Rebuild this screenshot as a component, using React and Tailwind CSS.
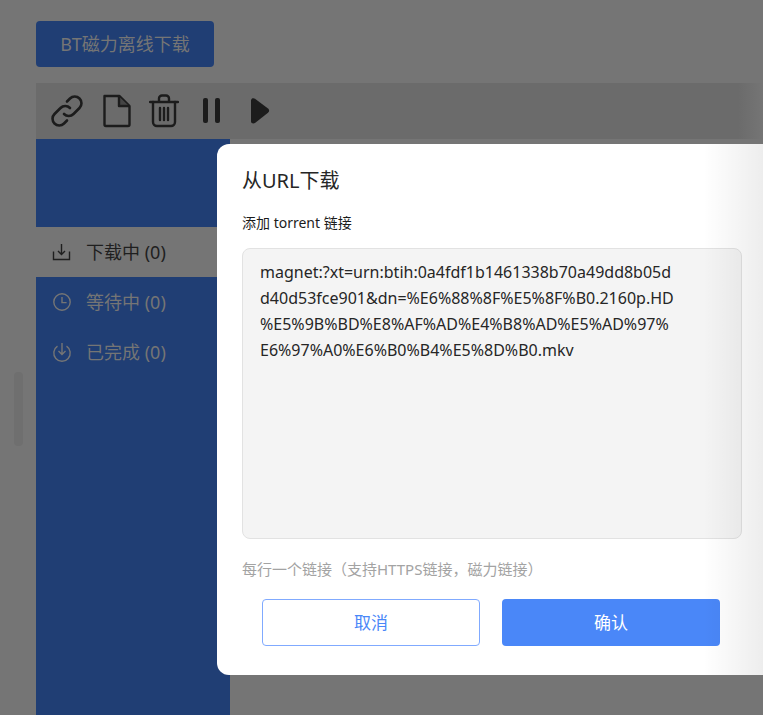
import React from "react";
import { Download, Clock } from "lucide-react";

const font = { };

function Row({ icon, label, active }) {
  return (
    <div className={`flex h-[50px] items-center pl-[16px] text-[18px] ${active ? "bg-[#757575] text-[#1f1f1f]" : "text-[#757575]"}`}>
      <span className="flex w-[20px] justify-center">{icon}</span>
      <span className="ml-[14px] whitespace-pre">{label}</span>
    </div>
  );
}

const TrayDown = () => (
  <svg width="20" height="20" viewBox="0 0 20 20" fill="none" stroke="currentColor" strokeWidth="1.4">
    <path d="M1.5 9.5V17.5H17.5V9.5" />
    <path d="M9.5 2V12.5M6 9l3.5 3.5L13 9" />
  </svg>
);
const ClockIcon = () => (
  <svg width="20" height="20" viewBox="0 0 20 20" fill="none" stroke="currentColor" strokeWidth="1.4">
    <circle cx="10" cy="10" r="8.2" />
    <path d="M10 5v5.6h4.6" />
  </svg>
);
const CircleDown = () => (
  <svg width="20" height="20" viewBox="0 0 20 20" fill="none" stroke="currentColor" strokeWidth="1.4">
    <path d="M5.5 4.2A8.2 8.2 0 1 0 14.5 4.2" />
    <path d="M10 1v11.5M6.5 9l3.5 3.5L13.500 9" />
  </svg>
);

export default function App() {
  return (
    <div className="relative h-[715px] w-[763px] overflow-hidden bg-[#757575] font-['Noto_Sans','Noto_Sans_CJK_SC',sans-serif]">
      <div className="pl-[36px] pt-[21px]">
        <div className="flex h-[46px] w-[178px] items-center justify-center rounded-[4px] bg-[#203e74] text-[18px] text-[#757575]">
          BT磁力离线下载
        </div>
        <div className="mt-[16px] flex h-[56px] items-center gap-[20px] bg-[#6b6b6b] pl-[14px] text-[#1c1c1c]">
          <svg width="34" height="34" viewBox="0 0 34 34" fill="none" stroke="currentColor" strokeWidth="2.6" strokeLinecap="round">
            <path d="M14 20a6.500 6.500 0 0 0 9.500 0l6-6a6.700 6.700 0 0 0-9.500-9.500l-3 3" />
            <path d="M20 14a6.500 6.500 0 0 0-9.500 0l-6 6a6.700 6.700 0 0 0 9.500 9.500l3-3" />
          </svg>
          <svg width="30" height="34" viewBox="0 0 30 34" fill="none" stroke="currentColor" strokeWidth="2.4" strokeLinejoin="round" className="-ml-[2px]">
            <path d="M2.500 2h15l10 10v18.500a1.500 1.500 0 0 1-1.500 1.500H4a1.500 1.500 0 0 1-1.500-1.500z" />
            <path d="M17 2.500V12h10" fill="#444" />
          </svg>
          <svg width="30" height="34" viewBox="0 0 30 34" fill="none" stroke="currentColor" strokeWidth="2.4" strokeLinecap="round" className="-ml-[3px]">
            <path d="M1 8h28M10 7V4.500a3 3 0 0 1 3-3h4a3 3 0 0 1 3 3V7" />
            <path d="M4 8v20a4 4 0 0 0 4 4h14a4 4 0 0 0 4-4V8" />
            <path d="M11 14v12M15 14v12M19 14v12" />
          </svg>
          <svg width="18" height="28" viewBox="0 0 18 28" fill="currentColor" className="ml-[4px]">
            <rect x="0" y="1" width="5" height="25" rx="2" />
            <rect x="12" y="1" width="5" height="25" rx="2" />
          </svg>
          <svg width="20" height="28" viewBox="0 0 20 28" fill="currentColor" className="ml-[9px]">
            <path d="M2 1.500C3 1 4 1 5 1.700L18 11.500c1.500 1.300 1.500 3 0 4.300L5 26C3.500 27 1 26.500 1 24.500V3z" />
          </svg>
        </div>
        <div className="h-[576px] w-[194px] bg-[#203e74]">
          <div className="h-[88px]" />
          <Row icon={<TrayDown />} label="下载中 (0)" active />
          <Row icon={<ClockIcon />} label="等待中 (0)" />
          <Row icon={<CircleDown />} label="已完成 (0)" />
        </div>
      </div>

      <div className="absolute left-[14px] top-[372px] h-[74px] w-[9px] rounded-[4px] bg-[#6f6f6f]" />
      <div className="absolute right-0 top-[83px] h-[56px] w-[25px] bg-gradient-to-r from-[#6b6b6b] to-[#757575]" />

      <div className="absolute left-[217px] top-[144px] h-[531px] w-[560px] rounded-[12px] bg-white">
        <div className="pl-[25px] pt-[20px]">
          <div className="text-[20px] leading-[34px] text-[#262626]">从URL下载</div>
          <div className="mt-[15px] text-[14px] leading-[20px] text-[#1c1c1c]">添加 torrent 链接</div>
          <div className="mt-[15px] h-[291px] w-[500px] rounded-[8px] border border-[#e2e2e2] bg-[#f4f4f4] py-[10px] pl-[17px] pr-[20px] text-[16px] leading-[26px] break-all text-[#262626]">
            magnet:?xt=urn:btih:0a4fdf1b1461338b70a49dd8b05d<br />
            d40d53fce901&amp;dn=%E6%88%8F%E5%8F%B0.2160p.HD<br />
            %E5%9B%BD%E8%AF%AD%E4%B8%AD%E5%AD%97%<br />
            E6%97%A0%E6%B0%B4%E5%8D%B0.mkv
          </div>
          <div className="mt-[20px] text-[15px] leading-[20px] text-[#a3a3a3]">每行一个链接（支持HTTPS链接，磁力链接）</div>
          <div className="mt-[20px] ml-[20px] flex gap-[22px]">
            <div className="flex h-[47px] w-[218px] items-center justify-center rounded-[4px] border border-[#80aaff] bg-white text-[17px] text-[#4a87f8]">取消</div>
            <div className="flex h-[47px] w-[218px] items-center justify-center rounded-[4px] bg-[#4a87f8] text-[17px] text-white">确认</div>
          </div>
        </div>
        <div className="pointer-events-none absolute right-[14px] top-0 h-full w-[60px] bg-gradient-to-r from-transparent to-[#00000012]" />
      </div>
    </div>
  );
}
